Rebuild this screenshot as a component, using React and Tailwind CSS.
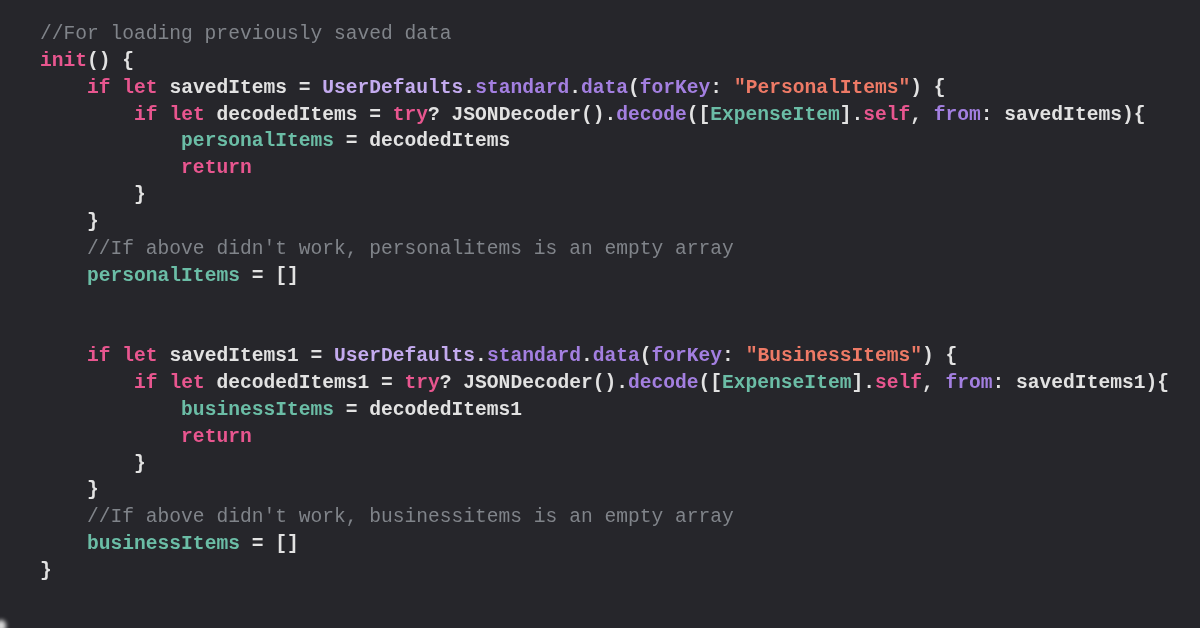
import React from "react";

const K = ({ children }) => <span className="text-[#e8568f]">{children}</span>;
const P = ({ children }) => <span className="text-[#a37fe0]">{children}</span>;
const C = ({ children }) => <span className="text-[#c4abef]">{children}</span>;
const T = ({ children }) => <span className="text-[#6bbda6]">{children}</span>;
const S = ({ children }) => <span className="text-[#ee7a66]">{children}</span>;
const M = ({ children }) => <span className="text-[#80848a] font-normal">{children}</span>;

const Line = ({ indent = 0, children }) => (
  <div className="whitespace-pre h-[26.85px]">
    {"    ".repeat(indent)}
    {children}
  </div>
);

export default function App() {
  return (
    <div className="w-[1200px] h-[628px] bg-[#26262b] overflow-hidden relative">
      <div
        className="pl-[40px] pt-[21px] text-[19.6px] leading-[26.85px] font-bold text-[#e2e2e2] blur-[0.4px]"
        style={{ fontFamily: '"Liberation Mono", "DejaVu Sans Mono", monospace' }}
      >
        <Line><M>//For loading previously saved data</M></Line>
        <Line><K>init</K>() {"{"}</Line>
        <Line indent={1}>
          <K>if</K> <K>let</K> savedItems = <C>UserDefaults</C>.<P>standard</P>.<P>data</P>(<P>forKey</P>: <S>"PersonalItems"</S>) {"{"}
        </Line>
        <Line indent={2}>
          <K>if</K> <K>let</K> decodedItems = <K>try</K>? JSONDecoder().<P>decode</P>([<T>ExpenseItem</T>].<K>self</K>, <P>from</P>: savedItems){"{"}
        </Line>
        <Line indent={3}><T>personalItems</T> = decodedItems</Line>
        <Line indent={3}><K>return</K></Line>
        <Line indent={2}>{"}"}</Line>
        <Line indent={1}>{"}"}</Line>
        <Line indent={1}><M>//If above didn't work, personalitems is an empty array</M></Line>
        <Line indent={1}><T>personalItems</T> = []</Line>
        <Line> </Line>
        <Line> </Line>
        <Line indent={1}>
          <K>if</K> <K>let</K> savedItems1 = <C>UserDefaults</C>.<P>standard</P>.<P>data</P>(<P>forKey</P>: <S>"BusinessItems"</S>) {"{"}
        </Line>
        <Line indent={2}>
          <K>if</K> <K>let</K> decodedItems1 = <K>try</K>? JSONDecoder().<P>decode</P>([<T>ExpenseItem</T>].<K>self</K>, <P>from</P>: savedItems1){"{"}
        </Line>
        <Line indent={3}><T>businessItems</T> = decodedItems1</Line>
        <Line indent={3}><K>return</K></Line>
        <Line indent={2}>{"}"}</Line>
        <Line indent={1}>{"}"}</Line>
        <Line indent={1}><M>//If above didn't work, businessitems is an empty array</M></Line>
        <Line indent={1}><T>businessItems</T> = []</Line>
        <Line>{"}"}</Line>
      </div>
      <div className="absolute left-[-4px] bottom-[-4px] w-[10px] h-[12px] rounded-full bg-[#d8d8d8] blur-[2px]" />
    </div>
  );
}
